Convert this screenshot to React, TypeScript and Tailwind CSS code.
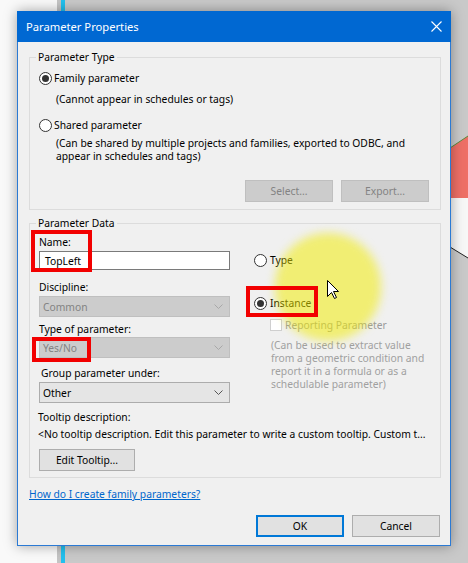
import React from "react";

const Radio = ({ checked }: { checked?: boolean }) => (
  <span className="flex h-[13px] w-[13px] shrink-0 items-center justify-center rounded-full border border-[#333] bg-white">
    {checked && <span className="h-[7px] w-[7px] rounded-full bg-[#333]" />}
  </span>
);

const Chevron = ({ color = "#606060" }: { color?: string }) => (
  <svg width="9" height="5" viewBox="0 0 9 5">
    <polyline points="0.5,0.5 4.5,4.5 8.5,0.5" fill="none" stroke={color} strokeWidth="1" />
  </svg>
);

const Select = ({ value, disabled }: { value: string; disabled?: boolean }) => (
  <div
    className={
      disabled
        ? "flex h-[21px] w-[191px] items-center justify-between border border-[#bfbfbf] bg-[#cccccc] pl-[3px] pr-[6px] text-[#838383]"
        : "flex h-[21px] w-[191px] items-center justify-between border border-[#acacac] bg-[#e5e5e5] pl-[3px] pr-[6px] text-black"
    }
  >
    <span>{value}</span>
    <Chevron color={disabled ? "#a8a8a8" : "#555"} />
  </div>
);

const Backdrop = () => (
  <svg className="absolute inset-0" width="468" height="563" viewBox="0 0 468 563">
    <rect x="0" y="0" width="468" height="563" fill="#f9f9f9" />
    <rect x="57" y="0" width="4" height="563" fill="#c4c4c4" />
    <rect x="61" y="0" width="4" height="563" fill="#22c0ee" />
    <rect x="65" y="0" width="403" height="563" fill="#c9c9c9" />
    <polygon points="450,148 468,136 468,198 450,198" fill="#ee6f66" />
    <line x1="450" y1="148" x2="468" y2="136" stroke="#5a8a3a" strokeWidth="1" />
    <polygon points="450,198 468,198 468,258 450,247" fill="#f7f7f7" />
    <line x1="450" y1="247" x2="468" y2="258" stroke="#222" strokeWidth="1" />
  </svg>
);

export default function App() {
  return (
    <div className="relative h-[563px] w-[468px] overflow-hidden pl-[17px] pt-[11px] font-['Noto_Sans',sans-serif] text-[10.3px] leading-[14px] text-black">
      <Backdrop />

      {/* Dialog */}
      <div className="relative flex h-[535px] w-[434px] flex-col border border-[#2b7ad4] bg-[#f0f0f0] shadow-[0_0_12px_rgba(0,0,0,0.35)]">
        <div className="-mx-px -mt-px flex h-[31px] items-center justify-between bg-[#0068d2] pl-[9px] pr-[9px] text-[11.2px] text-white">
          <span>Parameter Properties</span>
          <svg width="11" height="11" viewBox="0 0 11 11">
            <path d="M0.5 0.5 L10.5 10.5 M10.5 0.5 L0.5 10.5" stroke="white" strokeWidth="1.1" />
          </svg>
        </div>

        {/* Parameter Type */}
        <div className="relative ml-[11px] mt-[15px] h-[153px] w-[412px] border border-[#dcdcdc] pl-[9px] pt-[12px]">
          <span className="absolute left-[6px] top-[-8px] bg-[#f0f0f0] px-[2px]">Parameter Type</span>
          <div className="flex h-[16px] items-center gap-[2px]">
            <Radio checked />
            <span>Family parameter</span>
          </div>
          <div className="mt-[5px] flex h-[16px] items-center pl-[17px]">(Cannot appear in schedules or tags)</div>
          <div className="mt-[10px] flex h-[16px] items-center gap-[2px]">
            <Radio />
            <span>Shared parameter</span>
          </div>
          <div className="mt-[4px] pl-[17px] leading-[13px]">
            <div>(Can be shared by multiple projects and families, exported to ODBC, and</div>
            <div>appear in schedules and tags)</div>
          </div>
          <div className="mt-[17px] flex justify-end gap-[8px] pr-[11px]">
            <button className="h-[22px] w-[88px] border border-[#bfbfbf] bg-[#cccccc] text-[#838383]">Select...</button>
            <button className="h-[22px] w-[88px] border border-[#bfbfbf] bg-[#cccccc] text-[#838383]">Export...</button>
          </div>
        </div>

        {/* Parameter Data */}
        <div className="relative ml-[11px] mt-[13px] h-[255px] w-[412px] border border-[#dcdcdc] pl-[9px] pt-[11px]">
          <span className="absolute left-[6px] top-[-8px] bg-[#f0f0f0] px-[2px]">Parameter Data</span>
          <div className="flex">
            <div className="flex w-[191px] flex-col">
              <div className="h-[14px]">Name:</div>
              <div className="mt-[2px] flex h-[19px] items-center border border-[#7a7a7a] bg-white pl-[5px]">TopLeft</div>
              <div className="mt-[10px] h-[14px]">Discipline:</div>
              <div className="mt-[2px]">
                <Select value="Common" disabled />
              </div>
              <div className="mt-[5px] h-[14px]">Type of parameter:</div>
              <div className="mt-[1px]">
                <Select value="Yes/No" disabled />
              </div>
              <div className="mt-[8px] h-[14px] pl-[2px]">Group parameter under:</div>
              <div className="mt-[2px]">
                <Select value="Other" />
              </div>
            </div>
            <div className="ml-[24px] flex flex-col pt-[17px]">
              <div className="flex h-[16px] items-center gap-[3px]">
                <Radio />
                <span>Type</span>
              </div>
              <div className="mt-[27px] flex h-[16px] items-center gap-[3px]">
                <Radio checked />
                <span>Instance</span>
              </div>
              <div className="mt-[7px] flex h-[14px] items-center gap-[3px] pl-[16px] text-[#9a9a9a]">
                <span className="h-[12px] w-[12px] border border-[#cfcfcf] bg-white" />
                <span>Reporting Parameter</span>
              </div>
              <div className="mt-[7px] pl-[17px] leading-[13px] text-[#a0a0a0]">
                <div>(Can be used to extract value</div>
                <div>from a geometric condition and</div>
                <div>report it in a formula or as a</div>
                <div>schedulable parameter)</div>
              </div>
            </div>
          </div>
          <div className="-ml-px mt-[7px] h-[14px]">Tooltip description:</div>
          <div className="-ml-px mt-[3px] h-[14px] whitespace-nowrap">
            &lt;No tooltip description. Edit this parameter to write a custom tooltip. Custom t...
          </div>
          <button className="mt-[8px] h-[22px] w-[96px] border border-[#adadad] bg-[#e1e1e1]">Edit Tooltip...</button>
        </div>

        <a href="#" className="ml-[11px] mt-[9px] h-[14px] self-start text-[#0066cc] underline">
          How do I create family parameters?
        </a>

        <div className="mt-[14px] flex justify-end gap-[8px] pr-[10px]">
          <button className="h-[22px] w-[88px] border-2 border-[#0078d7] bg-[#e1e1e1]">OK</button>
          <button className="h-[22px] w-[88px] border border-[#adadad] bg-[#e1e1e1]">Cancel</button>
        </div>
      </div>

      {/* cursor highlight */}
      <div className="absolute left-[275px] top-[233px] h-[108px] w-[106px] rounded-full bg-[rgba(242,235,0,0.52)] blur-[5px]" />

      {/* annotation boxes */}
      <div className="absolute left-[31px] top-[230px] h-[42px] w-[61px] border-4 border-[#f20000]" />
      <div className="absolute left-[32px] top-[337px] h-[25px] w-[59px] border-4 border-[#f20000]" />
      <div className="absolute left-[246px] top-[286px] h-[31px] w-[72px] border-4 border-[#f20000]" />

      <svg className="absolute left-[327px] top-[280px]" width="13" height="20" viewBox="0 0 13 20">
        <path d="M0.5 0.5 L0.5 16.5 L4.5 12.5 L7.5 18.5 L9.5 17.5 L6.5 11.5 L11.5 11.5 Z" fill="white" stroke="black" strokeWidth="1" strokeLinejoin="round" />
      </svg>
    </div>
  );
}
